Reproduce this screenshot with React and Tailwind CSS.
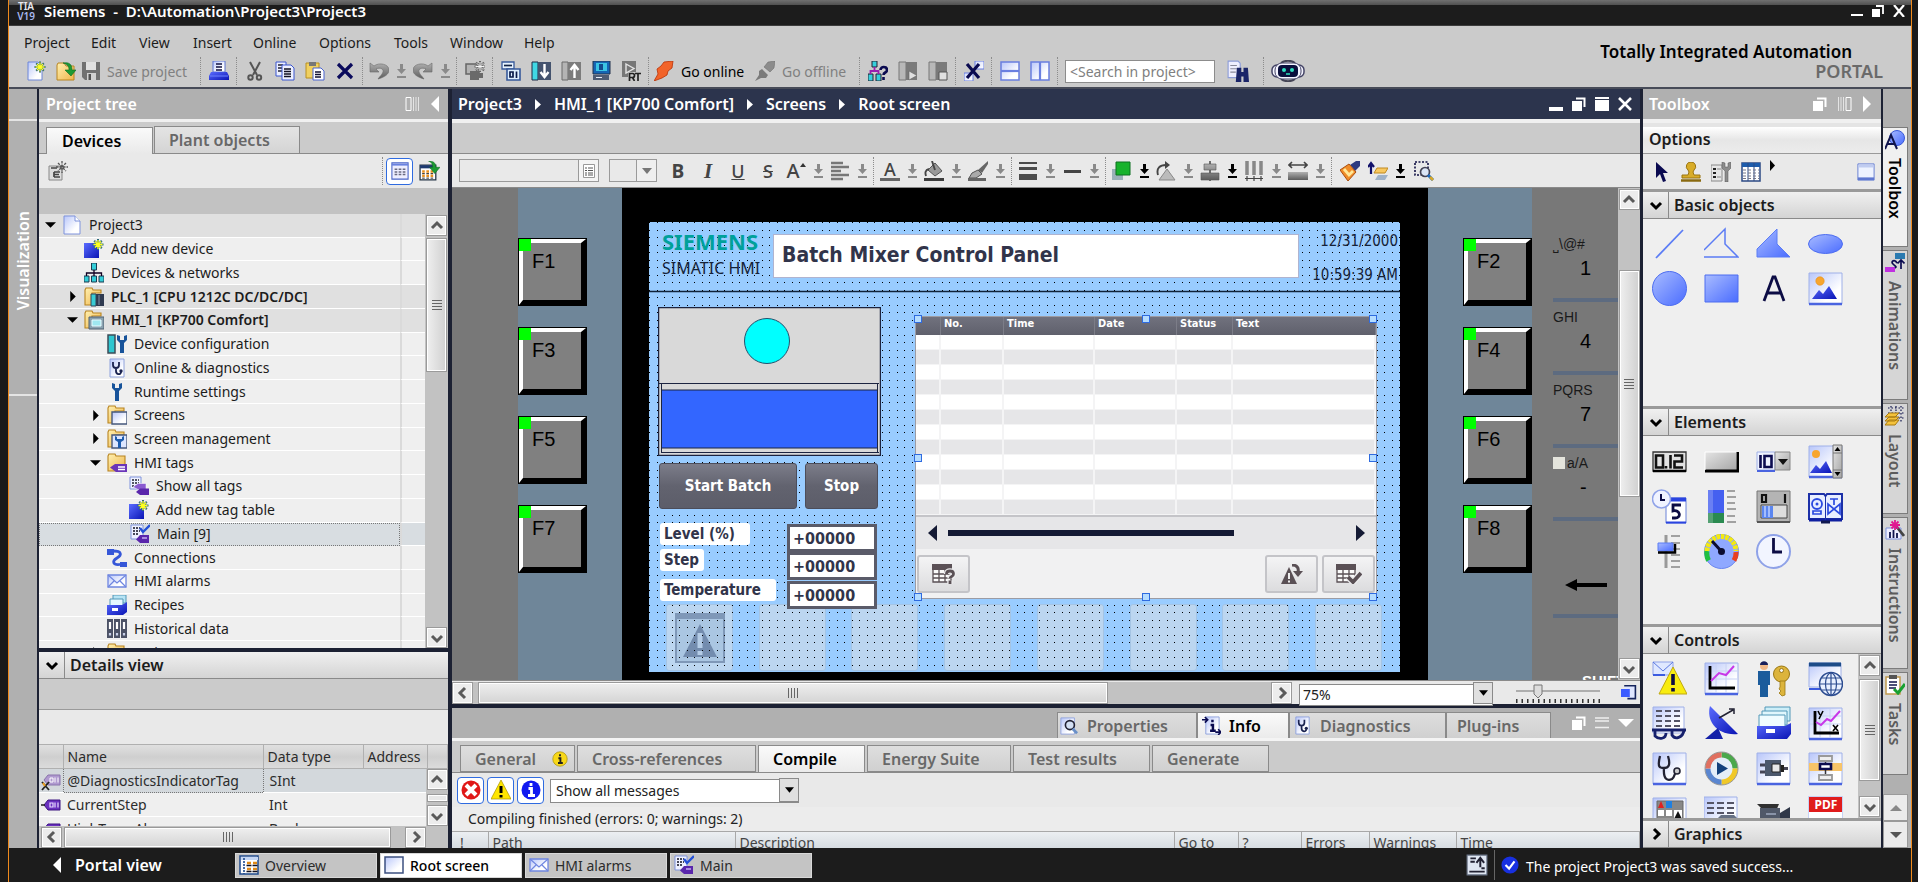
import React from "react";

const UI = "font-['Noto_Sans','Open_Sans',sans-serif]";
const HMI = "font-['DejaVu_Sans_Condensed','DejaVu_Sans',sans-serif]";

/* ---------- shared drawing pieces ---------- */

function Defs() {
  return (
    <svg className="absolute h-0 w-0" aria-hidden="true">
      <defs>
        <linearGradient id="lb" x1="0" y1="0" x2="1" y2="1">
          <stop offset="0" stopColor="#a9bcff" />
          <stop offset="1" stopColor="#4a6cff" />
        </linearGradient>
        <linearGradient id="pg" x1="0" y1="0" x2="1" y2="1">
          <stop offset="0" stopColor="#b8c6fa" />
          <stop offset="0.7" stopColor="#ffffff" />
        </linearGradient>
        <linearGradient id="db" x1="0" y1="0" x2="1" y2="1">
          <stop offset="0" stopColor="#5a6cff" />
          <stop offset="1" stopColor="#0a14b4" />
        </linearGradient>
        <linearGradient id="gr" x1="0" y1="0" x2="0" y2="1">
          <stop offset="0" stopColor="#b0b0b0" />
          <stop offset="1" stopColor="#5c5c5c" />
        </linearGradient>
        <linearGradient id="fo" x1="0" y1="0" x2="1" y2="1">
          <stop offset="0" stopColor="#fff0b0" />
          <stop offset="1" stopColor="#eeb54c" />
        </linearGradient>
        <linearGradient id="bt" x1="0" y1="0" x2="1" y2="1">
          <stop offset="0" stopColor="#e4e4e4" />
          <stop offset="1" stopColor="#a4a4a4" />
        </linearGradient>
        <pattern id="dots" width="15" height="15" patternUnits="userSpaceOnUse">
          <path d="M0 0h1v1H0zM8 0h1v1H8zM0 8h1v1H0zM8 8h1v1H8z" fill="#000" />
        </pattern>
      </defs>
    </svg>
  );
}

const spark = (x, y) => (
  <g transform={`translate(${x} ${y})`} stroke="#2d6a7a" strokeWidth="2">
    <path d="M0-5.500V5.500M-5.500 0H5.500M-3.800-3.800l7.600 7.600M-3.800 3.800l7.600-7.600" />
    <path d="M0-4.500V4.500M-4.500 0H4.500M-3-3l6 6M-3 3l6-6" stroke="#ffff20" strokeWidth="1.300" />
  </g>
);
const folder = <path d="M1 3l1-2h6l1 2h8v3h-9v12H1z" fill="url(#fo)" stroke="#b88420" strokeWidth="1.100" />;
const mountain = (
  <g>
    <circle cx="12" cy="10" r="4.200" fill="#f7a52e" stroke="#e88d10" strokeWidth="0.600" />
    <path d="M4 28l7-9 4 4 6-8 8 13z" fill="url(#db)" />
  </g>
);

const icons = {
  newp: <><path d="M2 1h10l4 4v14H2z" fill="url(#pg)" stroke="#6c86d8" />{spark(14, 6)}</>,
  open: <><path d="M1 4l1-2h6l2 3h8v14H1z" fill="url(#fo)" stroke="#b88420" /><path d="M7 2c6-1 9 1 9 7h4l-5 6-6-6h4c0-4-2-6-6-7z" fill="#1c9a34" stroke="#0d6b20" strokeWidth="0.600" /></>,
  save: <><path d="M1 1h18v18H4l-3-3z" fill="#707070" /><path d="M5 1h10v8H5z" fill="#e0e0e0" /><path d="M6 12h9v7H6z" fill="#d0d0d0" /><path d="M7.500 13h2.500v6H7.500z" fill="#505050" /></>,
  print: <><path d="M4 0h12v11H4z" fill="url(#pg)" stroke="#5a72d0" /><path d="M7 3h6M7 6h6M7 9h6" stroke="#101040" strokeWidth="1.300" /><path d="M2 11h16l2 4v4H0v-4z" fill="url(#db)" /><path d="M1 15h18" stroke="#6d82ff" /></>,
  cut: <g stroke="#555" fill="none" strokeWidth="2"><path d="M5 1l7 13M15 1L8 14" /><circle cx="5.500" cy="16.500" r="2.200" /><circle cx="14" cy="16.500" r="2.200" /></g>,
  copy: <><path d="M1 1h10v14H1z" fill="#eef1ff" stroke="#3a56d0" /><path d="M3 4h5M3 7h5M3 10h5" stroke="#223" strokeWidth="1.300" /><path d="M7 4h9l3 3v12H7z" fill="#eef1ff" stroke="#3a56d0" /><path d="M9 8h7M9 10.500h7M9 13h7M9 15.500h7" stroke="#112" strokeWidth="1.300" /></>,
  paste: <><path d="M1 2h13v15H1z" fill="#f0d060" stroke="#b89020" /><path d="M4 1h7v4H4z" fill="#777" /><path d="M8 7h8l3 3v9H8z" fill="#fff" stroke="#4a64d0" /><path d="M10 11h6M10 13.500h6M10 16h6" stroke="#113" strokeWidth="1.300" /></>,
  del: <path d="M3 3l14 14M17 3L3 17" stroke="#0a0a5c" strokeWidth="3.200" />,
  undo: <path d="M1 2v9h9L7 8c4-2 8 0 7 3-1 3-3 4-5 7 7-2 11-5 11-9 0-6-10-8-15-4z" fill="url(#gr)" stroke="#6a6a6a" strokeWidth="0.600" />,
  redo: <path d="M19 2v9h-9l3-3c-4-2-8 0-7 3 1 3 3 4 5 7C4 16 0 13 0 9c0-6 10-8 15-4z" fill="url(#gr)" stroke="#6a6a6a" strokeWidth="0.600" />,
  compile: <><path d="M1 3h13v10H1z" fill="#b4b4b4" stroke="#666" strokeWidth="1.500" /><path d="M5 10h9v9H5zM14 12h4v5h-4z" fill="#6a6a6a" /><path d="M15 0v11M9.500 5.500h11M11 1.500l8 8M19 1.500l-8 8" stroke="#666" strokeWidth="2" /><path d="M15 1v9M10.500 5.500h9M11.800 2.300l6.400 6.400M18.200 2.300l-6.400 6.400" stroke="#f4f4f4" strokeWidth="1" /></>,
  dl0: <><path d="M1 1h12v7H1z" fill="#e8f4ff" stroke="#37599a" strokeWidth="1.300" /><path d="M3 4.500h8" stroke="#124" strokeWidth="1.700" /><path d="M6 8h13v11H6z" fill="#dff0ff" stroke="#37599a" strokeWidth="1.600" /><path d="M9 11h3v5H9zM15.500 10.500V17" stroke="#0a1a4a" strokeWidth="1.700" fill="none" /></>,
  down: <><path d="M1 1h6v18H1z" fill="#40d8e4" stroke="#1d2a46" /><path d="M7 1h13v18H7z" fill="#44536e" /><path d="M13.500 3v12M9.500 11l4 5 4-5" stroke="#fff" strokeWidth="2.400" fill="none" /></>,
  up: <><path d="M1 1h6v18H1z" fill="#b4b4b4" stroke="#6a6a6a" /><path d="M7 1h13v18H7z" fill="#7c7c7c" /><path d="M13.500 17V5M9.500 9l4-5 4 5" stroke="#fff" strokeWidth="2.400" fill="none" /></>,
  pc: <><path d="M2 0h17v13H2z" fill="#1565b4" stroke="#22334e" /><path d="M5 2h11v8H5z" fill="#3ac4e4" /><path d="M8 3h4v6H8z" fill="#124a8c" /><path d="M2 14h16v5H2z" fill="#4e5c74" /><path d="M5 16.500h6" stroke="#e8eefa" /></>,
  rt: <><path d="M1 0h14v16H1z" fill="#777" /><path d="M5 3l8 4.500-8 4.500z" fill="none" stroke="#e4e4e4" strokeWidth="1.400" /><path d="M7 11h13v9H7z" fill="#cbcbcb" /><path d="M8.500 20v-7.500h3a2 2 0 010 4h-3M11.500 16.500l2 3.500M14 12.500h6M17 12.500v7.500" stroke="#222" strokeWidth="1.700" fill="none" /></>,
  online: <path d="M0 20l4-7-1-5 4-3 3-4 9-1-1 7-4 3-1 4-5 3z" fill="#f2642a" stroke="#b83208" strokeWidth="0.800" />,
  offline: <><path d="M0 20l4-6 0-4 3-2 6 6-2 3-5 0z" fill="#7a7a7a" /><path d="M9 6l4-5 7-1-1 7-4 4z" fill="#8c8c8c" stroke="#666" strokeWidth="0.500" /></>,
  nethelp: <><path d="M4 0h5v6H4zM0 13h5v7H0zM8 13h5v7H8z" fill="#35d0dc" stroke="#223" /><path d="M6.500 6v4M2.500 13v-3h8v3" stroke="#9a20b0" strokeWidth="1.800" fill="none" /><path d="M12.500 9c0-4 6.500-4 6.500 0 0 3-3.500 2-3.500 5M15.500 16v3" stroke="#0a0a50" strokeWidth="2.600" fill="none" /></>,
  start: <><path d="M1 1h7v18H1z" fill="#b8b8b8" stroke="#777" /><path d="M8 1h11v18H8z" fill="#7a7a7a" /><path d="M11 10l8 4.500-8 4.500z" fill="#e0e0e0" stroke="#666" strokeWidth="0.600" /></>,
  stop: <><path d="M1 1h7v18H1z" fill="#b8b8b8" stroke="#777" /><path d="M8 1h11v18H8z" fill="#7a7a7a" /><path d="M11 11h8v8h-8z" fill="#e0e0e0" stroke="#555" /></>,
  xref: <><path d="M11 0h9v8h-9zM0 12h9v8H0z" fill="url(#pg)" stroke="#6a7fe0" /><path d="M3 3l12 14M15 3L3 17" stroke="#0a0a50" strokeWidth="3.200" /></>,
  splith: <><path d="M1 1h18v18H1z" fill="url(#pg)" stroke="#6a7fe0" strokeWidth="1.500" /><path d="M1 10h18" stroke="#6a7fe0" strokeWidth="2.200" /></>,
  splitv: <><path d="M1 1h18v18H1z" fill="url(#pg)" stroke="#6a7fe0" strokeWidth="1.500" /><path d="M10 1v18" stroke="#6a7fe0" strokeWidth="2.200" /></>,
  find: <><path d="M1 1h9l2 2v13H1z" fill="#eef" stroke="#8c9cd8" /><path d="M3 5h6M3 8h6M3 11h5" stroke="#889" /><path d="M9 7h4v4h2V7h4l1 13h-5v-5h-2v5H8z" fill="#1a2468" /></>,
  doc: <><path d="M2 1h11l5 5v13H2z" fill="url(#pg)" stroke="#7f93dc" /><path d="M13 1v5h5" fill="#fff" stroke="#7f93dc" /></>,
  addnew: <><path d="M0 4h15v15H0z" fill="url(#db)" />{spark(14, 5.5)}</>,
  net: <><path d="M7.500 0h5v7h-5zM0 13h5v6H0zM7.500 13h5v6h-5zM15 13h5v6h-5z" fill="#33cdd8" stroke="#1a3a50" /><path d="M10 7v6M2.500 13v-3h15v3" stroke="#102" strokeWidth="1.300" fill="none" /></>,
  plc: <>{folder}<path d="M8 7h12v12H8z" fill="#2f3a50" /><path d="M7 7h5v12H7z" fill="#39ccd4" stroke="#33475a" /><path d="M15 8v10" stroke="#8491a8" /></>,
  hmi: <>{folder}<path d="M5 7h15v12H5z" fill="#8aa2b0" stroke="#506070" /><path d="M8 10h9v6H8z" fill="#9fe8f0" stroke="#e8fcff" /></>,
  devconf: <><path d="M1 1h7v18H1z" fill="#2fc6d0" stroke="#3c4c58" strokeWidth="1.500" /><path d="M10 1v5l3 3v10h4V9l3-3V1l-3 1v4h-4V2z" fill="#17539a" /></>,
  diag: <><path d="M3 1h14v18H3z" fill="url(#pg)" stroke="#8fa2dc" /><path d="M6 4v3c0 4 6 4 6 0V4M9 10v3c0 4 5 4 5 1" stroke="#1a2250" strokeWidth="1.800" fill="none" /><circle cx="14" cy="13" r="1.700" fill="#1a2250" /></>,
  wrench: <path d="M5 1v5l3 3v10h4V9l3-3V1l-3 1v4H8V2z" fill="#17539a" />,
  scr: <>{folder}<path d="M5 7h15v12H5z" fill="url(#pg)" stroke="#46587c" strokeWidth="1.400" /></>,
  scrm: <>{folder}<path d="M5 6h15v13H5z" fill="#dce6ff" stroke="#46587c" strokeWidth="1.400" /><path d="M8 7v4l3 2v6h3v-6l3-2V7l-2 1v2h-5V8z" fill="#1c5cae" /></>,
  tagf: <><path d="M1 3l1-2h6l1 2h9v15H1z" fill="url(#fo)" stroke="#b88420" strokeWidth="1.100" /><path d="M3 14.500l5-3.500h12v8H9z" fill="#6a35b8" /><path d="M11 14h7M11 16.500h7" stroke="#fff" strokeWidth="1.300" /></>,
  tags: <><path d="M1 1h11v12H1z" fill="#eef1ff" stroke="#7f93dc" /><path d="M3 4h7M3 7h7M3 10h4" stroke="#223" strokeDasharray="2 1" strokeWidth="1.300" /><path d="M4 11l5-3.500h8v6H9z" fill="#8a5ad0" stroke="#fff" strokeWidth="0.500" /><path d="M7 16l4-3.500h9V19h-9z" fill="#5a26ac" /></>,
  tagt: <><path d="M1 1h12v14H1z" fill="#eef1ff" stroke="#7f93dc" /><path d="M3 4h7M3 7h7M3 10h6" stroke="#112" strokeDasharray="2 1" strokeWidth="1.500" /><path d="M10 4l3 4 7-7" stroke="#2350d8" strokeWidth="2.400" fill="none" /><path d="M6 15.500l4-4.500h9v8h-9z" fill="#5a26ac" /><path d="M12 13h5v2h-5z" fill="#a98ae0" /></>,
  conn: <><path d="M0 1h7v6H0zM13 14h7v5h-7z" fill="#3657d8" /><path d="M6 3c9 0 9 4 4 7s-5 8 5 6" stroke="#3657d8" strokeWidth="2.800" fill="none" /></>,
  mail: <><path d="M1 4h18v12H1z" fill="url(#pg)" stroke="#6f86e0" strokeWidth="1.300" /><path d="M1 4l9 8 9-8M1 16l6-6M19 16l-6-6" stroke="#6f86e0" strokeWidth="1.200" fill="none" /></>,
  recipe: <><path d="M6 0h13v8H6z" fill="#b8e4f4" stroke="#5298b8" /><path d="M3 4h13v7H3z" fill="#e6f8ff" stroke="#5298b8" /><path d="M0 10h15l5-3v10l-4 3H0z" fill="url(#db)" /><path d="M5 13h6v3H5z" fill="#fff" /></>,
  hist: <><path d="M0 0h6v19H0zM7 0h6v19H7zM14 0h6v19h-6z" fill="#4c5266" /><path d="M3 3v7M10 3v7M17 3v7" stroke="#fff" strokeWidth="2.200" /><path d="M3 14v2.500M10 14v2.500M17 14v2.500" stroke="#c8d0e8" strokeWidth="2.200" /></>,
  tag: <><path d="M3 10l4-5h12v10H7z" fill="#6a2fc0" stroke="#3c1480" /><path d="M9 8h3v4H9zM14 7.500v5M17 7.500v5" stroke="#e8dcff" fill="none" strokeWidth="1.200" /><path d="M0 10h4" stroke="#222" strokeWidth="1.500" /></>,
  tagx: <><path d="M3 9l4-5h12v10H7z" fill="#b09ad0" stroke="#8a74ac" /><path d="M9 7h3v4H9zM14 6.500v5M17 6.500v5" stroke="#fff" fill="none" /><path d="M1 11l7 8M8 11l-7 8" stroke="#222" strokeWidth="1.800" /><path d="M2 12l2 3" stroke="#f0a020" strokeWidth="2" /></>,
  newgray: <><path d="M1 5h13v14H1z" fill="#ddd" stroke="#888" /><path d="M3 7h6M6 11h6M6 16v-5M6 16h6M6 13.500h5" stroke="#444" strokeWidth="1.700" /><path d="M14 0v12M8 6h12M10 2l8 8M18 2l-8 8" stroke="#555" strokeWidth="1.300" strokeDasharray="2.500 1" /></>,
  grid: <><path d="M1 1h18v18H1z" fill="#eef" stroke="#4a64c8" strokeWidth="1.200" /><path d="M1 3h18" stroke="#6a82e0" strokeWidth="2" /><path d="M4 8h3M8.500 8h3M13 8h3M4 11h3M8.500 11h3M13 11h3M4 14h3M8.500 14h3M13 14h3" stroke="#6a6a80" strokeWidth="1.700" /></>,
  gridgo: <><path d="M1 4h15v14H1z" fill="#fff" stroke="#234" strokeWidth="1.200" /><path d="M1 5.500h15" stroke="#1d3a70" strokeWidth="3" /><path d="M3 10h11M3 14h11" stroke="#e89020" strokeWidth="2.400" strokeDasharray="2.500 1.500" /><path d="M3 12h11M3 16.300h11" stroke="#222" strokeWidth="0.900" strokeDasharray="2.500 1.500" /><path d="M9 0c5 0 7 2 7 6h4l-5 6-5-6h3c0-3-1-5-4-6z" fill="#1c9a34" stroke="#0d6b20" strokeWidth="0.500" /></>,
  overview: <><path d="M1 1h18v18H1z" fill="#fff" stroke="#1f4a8c" strokeWidth="1.500" /><path d="M2 2h17v3H2z" fill="#c4d6f4" /><path d="M5 3v16" stroke="#1f4a8c" strokeWidth="1.600" strokeDasharray="2 1" /><path d="M8 8h4M14 8h4M8 14h4M14 14h4" stroke="#e08a18" strokeWidth="2.400" /><path d="M7.500 10.500h5M13.500 10.500h5M7.500 16.500h5M13.500 16.500h5" stroke="#112" strokeWidth="1.300" /></>,
  screen: <path d="M1 2h18v16H1z" fill="url(#pg)" stroke="#3c5080" strokeWidth="1.500" />,
  align: <path d="M1 2h12M1 6h18M1 10h10M1 14h18M1 18h12" stroke="#777" strokeWidth="2.400" />,
  bucket: <><path d="M4 9l7-7 7 8-7 5z" fill="#999" stroke="#555" /><path d="M8 0l3 9M5 8c-4 1-4 4-3 7" stroke="#444" fill="none" strokeWidth="1.900" /><path d="M0 18.500h20" stroke="#3c3c3c" strokeWidth="3" /></>,
  pen: <><path d="M20 0l-10 9 4 3 6-9z" fill="#666" /><path d="M10 9l-6 3-3 5 7 0 6-4z" fill="#aaa" stroke="#555" /><path d="M0 18.500h18" stroke="#666" strokeWidth="3" /></>,
  green: <><path d="M0 8h11v11H0z" fill="#9ab0b8" /><path d="M4 1h14v13H4z" fill="#18b22c" stroke="#0c7020" /></>,
  rot: <><path d="M3 19l8-11 8 11z" fill="#bbb" stroke="#888" /><path d="M2 14C0 7 4 4 10 4" stroke="#444" strokeWidth="1.900" fill="none" /><path d="M9 0l5 4-5 4z" fill="#444" /></>,
  alignc: <><path d="M10 0v20" stroke="#444" strokeWidth="1.500" /><path d="M4 3h12v6H4zM1 12h18v7H1z" fill="url(#gr)" stroke="#555" strokeWidth="0.600" /></>,
  dist: <><path d="M3 0v14M10 0v14M17 0v14" stroke="#888" strokeWidth="3.500" /><path d="M1 17.500h18M3 15v5M10 15v5M17 15v5" stroke="#444" strokeWidth="1.200" /></>,
  wid: <><path d="M1 4h18M4 1L1 4l3 3M16 1l3 3-3 3" stroke="#444" strokeWidth="1.600" fill="none" /><path d="M0 11h20v8H0z" fill="url(#gr)" /></>,
  brush: <><path d="M20 0l-4 0-6 4 5 6 5-5z" fill="#2c3a80" /><path d="M9 3l7 8-8 9-8-11z" fill="#f08c28" stroke="#a84e10" /><path d="M4 8l5 6 4-4" stroke="#ffe898" strokeWidth="2.800" fill="none" /></>,
  order: <><path d="M3 13V3M0 6l3-4 3 4" stroke="#10106a" strokeWidth="2.200" fill="none" /><path d="M6 12l3-5h11l-3 5z" fill="#f8c860" stroke="#c08a20" /><path d="M7 19l3-5h10l-3 5z" fill="#9fb2c8" /></>,
  zoomsel: <><path d="M1 1h13v13H1z" fill="none" stroke="#114" strokeWidth="1.600" strokeDasharray="2 1.500" /><circle cx="11" cy="11" r="4.500" fill="#dce6f6" stroke="#445" strokeWidth="1.700" /><path d="M14 14l5 5" stroke="#1d6ac0" strokeWidth="3" /><path d="M16 16l3 3" stroke="#d8a828" strokeWidth="2.500" /></>,
  cursor: <path d="M5 0v16l4-4 3 8 3-1-3-8h5z" fill="#0a0a50" />,
  stamp: <><path d="M10 0a4.500 4.500 0 013 8l-1 2 1 3h6v3H1v-3h6l1-3-1-2a4.500 4.500 0 013-8z" fill="#d8ac28" stroke="#9a7410" /><path d="M0 18.500h20" stroke="#8a6a10" strokeWidth="2.500" /></>,
  tools: <><path d="M0 3h11v16H0z" fill="#e6e6e6" stroke="#888" /><path d="M2 7h3M2 11h3M2 15h3" stroke="#222" strokeWidth="2.200" /><path d="M6 7h4M6 15h4" stroke="#888" /><path d="M11 0v6l3 3v11h3V9l3-3V0l-3 1v4h-3V1z" fill="#8c8c8c" stroke="#555" strokeWidth="0.500" /></>,
  cols: <><path d="M1 1h18v18H1z" fill="#fff" stroke="#2c4a84" strokeWidth="1.500" /><path d="M1 3h18" stroke="#1d5cac" strokeWidth="4" /><path d="M7 1v18M13 1v18" stroke="#2c4a84" /><path d="M2 8h16M2 11h16M2 14h16M2 16.500h16" stroke="#778" strokeDasharray="3 2" /></>,
  win: <><path d="M1 1h18v18H1z" fill="#eef3ff" stroke="#5f78d0" /><path d="M2 2h16v3H2z" fill="#c0ccf0" /><path d="M1 17.500h18" stroke="#5f78d0" strokeWidth="3" /></>,
  cross: <><circle cx="10" cy="10" r="9.500" fill="#e01818" /><path d="M5 5l10 10M15 5L5 15" stroke="#fff" strokeWidth="4" /></>,
  warn: <><path d="M10 0l10 19H0z" fill="#ffe600" stroke="#a89000" strokeWidth="0.700" /><path d="M10 6v7M10 15v2.500" stroke="#000" strokeWidth="3" /></>,
  info: <><circle cx="10" cy="10" r="9.500" fill="#1018f0" /><path d="M10 3v3M7.500 8.500H10.500V15M7 15.500h7" stroke="#fff" strokeWidth="2.800" fill="none" /></>,
  infoy: <><circle cx="10" cy="10" r="9" fill="#f8d818" stroke="#b09810" /><path d="M10 4v2.500M8 9h2.500v5M7.500 15h6" stroke="#222" strokeWidth="2.400" fill="none" /></>,
  prop: <><path d="M1 1h15v18H1z" fill="url(#pg)" stroke="#8fa2dc" /><circle cx="11" cy="9" r="5" fill="#d4e0f4" stroke="#223" strokeWidth="1.800" /><path d="M14 13l5 5" stroke="#6a90c8" strokeWidth="3" /></>,
  infot: <><path d="M4 1h14v18H4z" fill="url(#pg)" stroke="#8fa2dc" /><path d="M0 4h6M3 1l3 3-3 3M14 17h6M17 14l3 3-3 3" stroke="#0a0a50" strokeWidth="1.700" fill="none" /><path d="M11 4v2.500M9 9.500h2.500v5M8.500 15.500h6" stroke="#0a0a50" strokeWidth="2.600" fill="none" /></>,
  ok: <><circle cx="10" cy="10" r="9.500" fill="#1830e0" /><path d="M5 10l4 4 6-8" stroke="#fff" strokeWidth="2.400" fill="none" /></>,
  stat: <><path d="M1 1h18v18H1z" fill="#dfe6f2" stroke="#6a7488" /><path d="M4 4h5M4 7h4M3 16h14M14 13h3" stroke="#223" strokeWidth="1.700" /><path d="M13 12V4M9.500 8L13 3.500 16.500 8" stroke="#223" strokeWidth="1.800" fill="none" /></>,
  tbA: <><circle cx="12" cy="8" r="7.500" fill="url(#lb)" stroke="#3a5ad8" /><path d="M0 19l6-14 6 14M2.500 14h7" stroke="#10144c" strokeWidth="2" fill="none" /></>,
  anim: <><path d="M10 0h10v6H10z" fill="#2a7ab0" /><path d="M0 14h10v5H0z" fill="#c030e0" /><path d="M16 7v9M12.500 10.500L16 7l3.500 3.500M12 10c-2-4-7-2-4 1s4 3 2 4" stroke="#0a0a50" strokeWidth="1.700" fill="none" /></>,
  layout: <><path d="M3 2h16M3 7h16M3 12h16M6 0v16M11 0v16M16 0v16" stroke="#10144c" strokeWidth="1.200" strokeDasharray="1.500 2" /><path d="M0 19l4-5h10l-4 5zM0 15l4-4h10l-4 4zM0 11l4-4h10l-4 4z" fill="#f4c23c" stroke="#a87a10" /></>,
  instr: <><path d="M1 8h15v11H1z" fill="#eef" stroke="#7f93dc" /><path d="M5 12v6M8.500 10v8M12 13v5" stroke="#10144c" strokeWidth="1.800" /><path d="M11 6l8 10" stroke="#444" strokeWidth="2.800" /><path d="M10 0v10M5 5h10M6.500 1.500l7 7M13.500 1.500l-7 7" stroke="#e01890" strokeWidth="1.800" /></>,
  tasks: <><path d="M1 2h14v17H1z" fill="#fff" stroke="#c09a50" strokeWidth="1.500" /><path d="M4 0h8v4H4z" fill="#555" /><path d="M4 7h8M4 10h8M4 13h7" stroke="#10144c" strokeWidth="1.500" /><path d="M9 14l4 4 7-9" stroke="#18a030" strokeWidth="3" fill="none" /></>,
  corner: <><path d="M4 1h14v16H8" fill="#dfe6ff" stroke="#16245c" strokeWidth="2" /><path d="M0 5h11v10H0z" fill="#3c5cff" /></>,
};

function Icon({ n, className = "h-5 w-5" }) {
  return (
    <svg viewBox="0 0 20 20" className={`${className} shrink-0`} fill="none" aria-hidden="true">
      {icons[n]}
    </svg>
  );
}

function Drop({ dark }) {
  return (
    <svg viewBox="0 0 12 16" className="h-4 w-3 shrink-0" aria-hidden="true">
      <path d="M5 1h3v5h3L6.500 11 2 6h3zM2 13h9v2H2z" fill={dark ? "#000" : "#8a8a8a"} />
    </svg>
  );
}

const Sep = () => <span className="mr-[3px] ml-[2px] h-7 w-px shrink-0 border-l border-dotted border-[#8c8c8c]" />;

function Tool({ n, label, size }) {
  return (
    <button aria-label={label || n} className="flex w-[30px] shrink-0 items-center justify-center">
      <Icon n={n} className={size} />
    </button>
  );
}

function Split({ label, dark, children }) {
  return (
    <button aria-label={label} className="flex h-7 w-[44px] shrink-0 items-center gap-[6px] pl-[3px]">
      <span className="flex w-5 justify-center">{children}</span>
      <Drop dark={dark} />
    </button>
  );
}

const chev = {
  up: "M3 10l5-5 5 5",
  down: "M3 6l5 5 5-5",
  left: "M10 3L5 8l5 5",
  right: "M6 3l5 5-5 5",
};
function Chevron({ d, className = "h-4 w-4", w = 3, color = "#5a5a5a" }) {
  return (
    <svg viewBox="0 0 16 16" className={`${className} shrink-0`} fill="none" aria-hidden="true">
      <path d={chev[d]} stroke={color} strokeWidth={w} />
    </svg>
  );
}
function ScrollBtn({ d, className = "h-[21px] w-[21px]" }) {
  return (
    <button aria-label={`Scroll ${d}`} className={`${className} flex shrink-0 items-center justify-center border border-[#9a9a9a] bg-[#ececec] shadow-[inset_0_0_0_1px_#fff]`}>
      <Chevron d={d} />
    </button>
  );
}
const THUMB = "flex items-center justify-center border border-[#9a9a9a] shadow-[inset_0_0_0_1px_#fff]";
const GripV = () => <span className="flex flex-col gap-[2px]">{[0, 1, 2, 3].map((i) => <i key={i} className="h-px w-[10px] bg-[#666]" />)}</span>;
const GripH = () => <span className="flex gap-[2px]">{[0, 1, 2, 3].map((i) => <i key={i} className="h-[10px] w-px bg-[#666]" />)}</span>;

const WinMin = () => <svg viewBox="0 0 14 16" className="h-4 w-[14px]"><path d="M0 11h14v4H0z" fill="#fff" /></svg>;
const WinRest = () => <svg viewBox="0 0 14 14" className="h-[14px] w-[14px]"><path d="M0 4h10v10H0z" fill="#fff" /><path d="M4 1.500h8.500V10" stroke="#fff" strokeWidth="2" fill="none" /></svg>;
const WinMax = () => <svg viewBox="0 0 14 14" className="h-[14px] w-[14px]"><path d="M0 0h14v2H0zM0 3h14v11H0z" fill="#fff" /></svg>;
const WinX = () => <svg viewBox="0 0 14 14" className="h-[14px] w-[14px]"><path d="M1 1l12 12M13 1L1 13" stroke="#fff" strokeWidth="2.600" /></svg>;
const PinBars = ({ flip }) => (
  <svg viewBox="0 0 14 14" className={flip ? "h-[14px] w-[14px] rotate-180" : "h-[14px] w-[14px]"}>
    <path d="M1 .5h5v13H1z" stroke="#fff" fill="none" /><path d="M8.500 0v14M11 0v14M13.500 0v14" stroke="#e4e4e4" />
  </svg>
);
const Tri = ({ d, fill = "#fff", className = "h-4 w-2" }) => (
  <svg viewBox="0 0 8 16" className={className} preserveAspectRatio="none" aria-hidden="true">
    <path d={d === "left" ? "M8 0v16L0 8z" : "M0 0v16l8-8z"} fill={fill} />
  </svg>
);

/* ---------- title bar, menu, main toolbar ---------- */

function TopBar() {
  const menu = [["Project", "w-[67px]"], ["Edit", "w-[48px]"], ["View", "w-[54px]"], ["Insert", "w-[60px]"], ["Online", "w-[66px]"], ["Options", "w-[75px]"], ["Tools", "w-[56px]"], ["Window", "w-[74px]"], ["Help", "w-[50px]"]];
  return (
    <header className="shrink-0">
      <div className="flex h-[26px] items-center justify-between border-b border-[#3c3c3c] bg-[linear-gradient(#707070_0,#505050_5px,#1c1c1c_5px)] pr-[6px] pb-1 pl-[7px] text-white">
        <div className="flex items-center gap-2">
          <svg viewBox="0 0 20 20" className="h-5 w-5" aria-hidden="true">
            <text x="10" y="9" textAnchor="middle" fontSize="10" fontWeight="600" fill="#e8e8f0">TIA</text>
            <text x="10" y="19" textAnchor="middle" fontSize="10" fontWeight="600" fill="#a9b8f0">V19</text>
          </svg>
          <h1 className="text-[15px] leading-5 font-semibold">Siemens&nbsp; - &nbsp;D:\Automation\Project3\Project3</h1>
        </div>
        <div className="flex items-center gap-[9px]">
          <button aria-label="Minimize"><svg viewBox="0 0 12 12" className="h-3 w-3"><path d="M0 9h12v2H0z" fill="#fff" /></svg></button>
          <button aria-label="Restore"><svg viewBox="0 0 12 12" className="h-3 w-3"><path d="M0 4h8v8H0z" fill="#fff" /><path d="M4 1h7v8" stroke="#fff" strokeWidth="1.800" fill="none" /></svg></button>
          <button aria-label="Close"><svg viewBox="0 0 12 12" className="h-3 w-3"><path d="M1 0l10 12M11 0L1 12" stroke="#fff" strokeWidth="2.200" /></svg></button>
        </div>
      </div>
      <div className="flex h-[63px] justify-between border-b-2 border-[#474b58] bg-[#cbcbcb]">
        <div>
          <nav className="flex h-[29px] items-end pl-[15px] text-[14px] leading-6 text-[#1c1c1c]">
            {menu.map(([m, w]) => <a key={m} href="#" className={w}>{m}</a>)}
          </nav>
          <div className="flex h-[32px] items-center pl-[12px]">
            <Tool n="newp" label="New project" /><Tool n="open" label="Open project" />
            <button className="flex w-[117px] items-center gap-[6px] text-[14px] whitespace-nowrap text-[#808080]"><Icon n="save" />Save project</button>
            <Sep /><Tool n="print" /><Sep />
            <Tool n="cut" /><Tool n="copy" /><Tool n="paste" /><Tool n="del" label="Delete" />
            <Sep />
            <Split label="Undo"><Icon n="undo" /></Split><Split label="Redo"><Icon n="redo" /></Split>
            <Sep /><Tool n="compile" /><Sep />
            <Tool n="dl0" label="Load" /><Tool n="down" label="Download" /><Tool n="up" label="Upload" /><Tool n="pc" label="Simulation" /><Tool n="rt" label="Runtime" />
            <Sep />
            <button className="flex w-[101px] items-center gap-[7px] pl-[2px] text-[14px] whitespace-nowrap text-black"><Icon n="online" />Go online</button>
            <button className="flex w-[104px] items-center gap-[7px] pl-[2px] text-[14px] whitespace-nowrap text-[#808080]"><Icon n="offline" />Go offline</button>
            <Sep /><Tool n="nethelp" label="Accessible devices" /><Tool n="start" label="Start" /><Tool n="stop" label="Stop" />
            <Sep /><Tool n="xref" label="Cross-references" /><Sep /><Tool n="splith" label="Split horizontally" /><Tool n="splitv" label="Split vertically" /><Sep />
            <input aria-label="Search in project" placeholder="<Search in project>" className="ml-1 h-[23px] w-[150px] border border-[#8c8c8c] bg-white px-1 text-[14px] placeholder:text-[#808080]" />
            <button aria-label="Search" className="flex w-[46px] justify-center"><Icon n="find" className="h-[22px] w-[22px]" /></button>
            <Sep />
            <button aria-label="Assistant" className="pl-1">
              <svg viewBox="0 0 34 22" className="h-[22px] w-[34px]"><path d="M10 3c4-3 10-3 14 0M10 19c4 3 10 3 14 0" stroke="#445" strokeWidth="2" fill="none" /><rect x="1" y="5" width="32" height="12" rx="5" fill="#f4f4ff" stroke="#446" strokeWidth="1.500" /><rect x="4" y="3" width="26" height="16" rx="7" fill="#f4f4ff" stroke="#446" /><rect x="7" y="5" width="20" height="12" rx="4" fill="#0a0f3c" /><circle cx="13" cy="10" r="2" fill="#2fe0c0" /><circle cx="21" cy="10" r="2" fill="#2fe0c0" /><path d="M15 14h4" stroke="#2fe0c0" strokeWidth="1.500" /></svg>
            </button>
          </div>
        </div>
        <div className="flex flex-col items-end pt-[16px] pr-[28px] text-[17px] leading-[20px] font-semibold">
          <span className="pr-[31px]">Totally Integrated Automation</span>
          <span className="text-[18px] leading-[18px] text-[#6a6a6a]">PORTAL</span>
        </div>
      </div>
    </header>
  );
}

/* ---------- project tree ---------- */

const ROWS = [
  [0, "doc", "Project3", "open", "head"],
  [1, "addnew", "Add new device"],
  [1, "net", "Devices & networks"],
  [1, "plc", "PLC_1 [CPU 1212C DC/DC/DC]", "closed", "bold"],
  [1, "hmi", "HMI_1 [KP700 Comfort]", "open", "bold"],
  [2, "devconf", "Device configuration"],
  [2, "diag", "Online & diagnostics"],
  [2, "wrench", "Runtime settings"],
  [2, "scr", "Screens", "closed"],
  [2, "scrm", "Screen management", "closed"],
  [2, "tagf", "HMI tags", "open"],
  [3, "tags", "Show all tags"],
  [3, "addnew", "Add new tag table"],
  [3, "tagt", "Main [9]", null, "sel"],
  [2, "conn", "Connections"],
  [2, "mail", "HMI alarms"],
  [2, "recipe", "Recipes"],
  [2, "hist", "Historical data"],
  [2, "scr", "Scripts", "closed"],
];
const INDENT = ["pl-0", "pl-[22px]", "pl-[45px]", "pl-[67px]"];

function TreeRow({ row }) {
  const [lvl, icon, text, arrow, kind] = row;
  const bg = kind === "sel" ? "bg-[#d8dde1]" : kind ? "bg-[#e0e0e0]" : "bg-[#efefef]";
  const sel = kind === "sel" ? "border border-dotted border-[#777]" : "border-b border-white";
  return (
    <li className={`flex min-h-0 flex-1 ${bg}`}>
      <div className={`flex flex-1 items-center ${INDENT[lvl]} ${sel}`}>
        <span className="flex w-[23px] justify-center">
          {arrow === "open" && <svg viewBox="0 0 12 6" className="h-[6px] w-[11px]"><path d="M0 0h12L6 6z" /></svg>}
          {arrow === "closed" && <svg viewBox="0 0 6 12" className="h-[11px] w-[6px]"><path d="M0 0v12l6-6z" /></svg>}
        </span>
        <Icon n={icon} />
        <span className={`pl-[7px] text-[14px] leading-5 text-[#1c1c1c] ${kind === "bold" ? "font-semibold" : ""}`}>{text}</span>
      </div>
      <div className="w-[25px] border-b border-l-2 border-b-white border-l-[#dadada]" />
    </li>
  );
}

function SectionHead({ children, open = true }) {
  return (
    <button className="flex h-[27px] w-full shrink-0 items-stretch border-b border-[#8a8a8a] bg-linear-to-b from-[#f0f0f0] via-[#e2e2e2] to-[#d4d4d4] text-left text-[16px] font-semibold text-[#1c1c1c]">
      <span className="flex w-[26px] items-center justify-center border-r border-[#8a8a8a]"><Chevron d={open ? "down" : "right"} color="#000" w={3} className="h-4 w-4" /></span>
      <span className="pl-[5px] leading-[26px]">{children}</span>
    </button>
  );
}

function DetailsView() {
  const tags = [["tagx", "@DiagnosticsIndicatorTag", "SInt"], ["tag", "CurrentStep", "Int"], ["tag", "HighTempAlarm", "Bool"]];
  return (
    <section className="flex h-[196px] shrink-0 flex-col">
      <SectionHead>Details view</SectionHead>
      <div className="h-[31px] shrink-0 border-b border-[#9a9a9a] bg-[#cbcbcb]" />
      <div className="h-[34px] shrink-0 bg-[#e9e9e9]" />
      <div className="relative min-h-0 flex-1 overflow-hidden bg-[#efefef]">
        <table className="w-full table-fixed text-left text-[14px] text-[#2c2c2c]">
          <colgroup><col className="w-6" /><col className="w-[200px]" /><col className="w-[100px]" /><col className="w-16" /><col /></colgroup>
          <thead>
            <tr className="h-6 bg-linear-to-b from-[#e0e0e0] via-[#cfcfcf] to-[#dcdcdc]">
              {["", "Name", "Data type", "Address", ""].map((h, i) => <th key={i} className="h-6 border-y border-r border-[#b0b0b0] p-0 pl-1 leading-5 font-normal">{h}</th>)}
            </tr>
          </thead>
          <tbody>
            {tags.map(([ic, n, t], i) => (
              <tr key={n} className={i === 0 ? "bg-[#d3d8dc]" : "bg-[#efefef]"}>
                <td className="h-6 border-b border-white p-0 pl-[2px]"><Icon n={ic} /></td>
                <td className={`h-6 p-0 pl-1 leading-5 ${i === 0 ? "border border-dotted border-[#777]" : "border-b border-white"}`}>{n}</td>
                <td className="h-6 border-b border-white p-0 pl-[6px] leading-5">{t}</td>
                <td className="border-b border-white" /><td />
              </tr>
            ))}
          </tbody>
        </table>
        <div className="absolute top-[25px] right-0 bottom-0 flex w-[22px] flex-col items-center justify-between bg-[#c2c2c2]">
          <ScrollBtn d="up" />
          <div className={`${THUMB} h-2 w-[21px] bg-[#e8e8e8]`} />
          <ScrollBtn d="down" />
        </div>
      </div>
      <div className="flex h-[22px] shrink-0 items-center bg-[#c2c2c2] pr-[22px] pl-[2px]">
        <ScrollBtn d="left" />
        <div className={`${THUMB} ml-[2px] h-[21px] w-[327px] bg-linear-to-b from-[#efefef] to-[#d4d4d4]`}><GripH /></div>
        <span className="flex-1" />
        <ScrollBtn d="right" />
      </div>
    </section>
  );
}

function ProjectTree() {
  return (
    <aside className="flex w-[415px] shrink-0 flex-col border-r-4 border-l-2 border-[#1c2133] bg-[#c2c2c2]">
      <div className="flex h-[30px] shrink-0 items-center justify-between bg-[#b0b0b0] pr-[9px] pl-[7px]">
        <h2 className="text-[16px] font-semibold text-white">Project tree</h2>
        <div className="flex items-center gap-3"><PinBars /><Tri d="left" /></div>
      </div>
      <div className="flex h-[35px] shrink-0 items-end border-t-[3px] border-b border-t-[#f0f0f0] border-b-[#8a8a8a] bg-[#cbcbcb] pl-[7px]">
        <button className="relative top-px h-[27px] w-[107px] border border-b-0 border-[#8a8a8a] bg-linear-to-b from-[#fafafa] to-[#e9e9e9] pl-[15px] text-left text-[16px] leading-6 font-semibold">Devices</button>
        <button className="ml-px h-[27px] w-[146px] border border-b-0 border-[#8a8a8a] bg-linear-to-b from-[#e4e4e4] to-[#d4d4d4] pl-[14px] text-left text-[16px] leading-6 font-semibold text-[#686868]">Plant objects</button>
      </div>
      <div className="flex h-[34px] shrink-0 items-center bg-[#e9e9e9] pr-2 pl-[9px]">
        <button aria-label="New group"><Icon n="newgray" /></button>
        <span className="flex-1" />
        <Sep />
        <button aria-label="Table view" className="flex h-[27px] w-[27px] items-center justify-center rounded-sm border border-[#2f6be0] bg-white"><Icon n="grid" className="h-[18px] w-[18px]" /></button>
        <button aria-label="Export" className="ml-[6px]"><Icon n="gridgo" className="h-[21px] w-[21px]" /></button>
      </div>
      <div className="h-[26px] shrink-0" />
      <div className="flex min-h-0 flex-1 overflow-hidden border-b-4 border-[#1c2133]">
        <ul className="flex h-[451px] flex-1 flex-col">{ROWS.map((r, i) => <TreeRow key={i} row={r} />)}</ul>
        <div className="flex w-[23px] flex-col items-center pt-px">
          <ScrollBtn d="up" />
          <div className={`${THUMB} mt-[2px] h-[134px] w-[21px] bg-linear-to-r from-[#efefef] to-[#d0d0d0]`}><GripV /></div>
          <span className="flex-1" />
          <ScrollBtn d="down" />
        </div>
      </div>
      <DetailsView />
    </aside>
  );
}

/* ---------- editor ---------- */

function EditorToolbar() {
  return (
    <div className="flex h-[34px] shrink-0 items-center border-b border-[#8a8a8a] bg-[#e9e9e9] pl-[7px] text-[#444]">
      <div className="flex h-[23px] w-[140px] border border-[#9a9a9a]">
        <input aria-label="Font" className="w-[118px] bg-transparent" />
        <button aria-label="Font list" className="flex flex-1 items-center justify-center border-l border-[#9a9a9a] bg-[#f4f4f4]">
          <svg viewBox="0 0 12 14" className="h-[14px] w-3"><path d="M.5.5h11v13H.5z" fill="#fff" stroke="#999" /><path d="M2 4h2M2 6.500h2M2 9h2M2 11h2M5 4h5M5 6.500h5M5 9h5M5 11h5" stroke="#555" /></svg>
        </button>
      </div>
      <div className="mr-[6px] ml-[10px] flex h-[23px] w-[48px] border border-[#9a9a9a]">
        <input aria-label="Font size" className="w-[26px] bg-transparent" />
        <button aria-label="Size list" className="flex flex-1 items-center justify-center border-l border-[#9a9a9a] bg-[#efefef]"><svg viewBox="0 0 10 6" className="h-[6px] w-[10px]"><path d="M0 0h10L5 6z" fill="#777" /></svg></button>
      </div>
      <button className="w-[30px] font-['Open_Sans',sans-serif] text-[19px] leading-6 font-bold">B</button>
      <button className="w-[30px] font-['Liberation_Serif',serif] text-[21px] leading-6 font-bold italic">I</button>
      <button className="w-[30px] text-[18px] leading-6 font-medium underline">U</button>
      <button className="w-[30px] text-[18px] leading-6 font-medium line-through">S</button>
      <Split label="Grow font">
        <span className="text-[20px] leading-6 font-medium">A</span>
        <svg viewBox="0 0 6 4" className="mt-1 h-1 w-[6px] shrink-0"><path d="M0 4h6L3 0z" fill="#333" /></svg>
      </Split>
      <Split label="Alignment"><Icon n="align" /></Split>
      <Sep />
      <Split label="Font color"><span className="w-5 border-b-[3px] border-[#666] text-center text-[18px] leading-[18px] font-medium">A</span></Split>
      <Split label="Fill color"><Icon n="bucket" /></Split>
      <Split label="Line color"><Icon n="pen" /></Split>
      <Sep />
      <Split label="Line style"><svg viewBox="0 0 20 20" className="h-5 w-5"><path d="M1 1h18v2H1zM1 6h18v3H1zM1 13h18v6H1z" fill="#4c4c4c" /></svg></Split>
      <Split label="Line ends"><svg viewBox="0 0 20 20" className="h-5 w-5"><path d="M2 9h17v3H2z" fill="#444" /></svg></Split>
      <Sep />
      <Split label="Arrange" dark><Icon n="green" /></Split>
      <Split label="Rotate"><Icon n="rot" /></Split>
      <Split label="Align" dark><Icon n="alignc" /></Split>
      <Split label="Distribute"><Icon n="dist" /></Split>
      <Split label="Same width"><Icon n="wid" /></Split>
      <Sep />
      <Tool n="brush" label="Format painter" />
      <Split label="Order" dark><Icon n="order" /></Split>
      <Tool n="zoomsel" label="Zoom selection" />
    </div>
  );
}

function FKey({ name }) {
  return (
    <div className="relative h-[68px] w-[69px] border border-black">
      <div className="h-full border-t-4 border-r-[5px] border-b-[5px] border-l-4 border-t-white border-r-black border-b-black border-l-white bg-[#808080] pt-[6px] pl-[9px] font-['Liberation_Sans',sans-serif] text-[20px] leading-6 text-black">{name}</div>
      <span className="absolute top-0 left-0 h-3 w-3 bg-[#00ff00]" />
    </div>
  );
}
function Keys({ names }) {
  return <div className="flex flex-col gap-[21px] pt-[50px]">{names.map((n) => <FKey key={n} name={n} />)}</div>;
}

function IoField({ label }) {
  return <input aria-label={label} defaultValue="+00000" className="h-[28px] w-[90px] border-[3px] border-[#5a5b69] bg-white pl-[3px] text-[16px] leading-5 font-bold text-[#31344a]" />;
}

function AlarmView() {
  const cols = ["", "No.", "Time", "Date", "Status", "Text"];
  const btn = "flex h-[38px] w-[53px] items-center justify-center rounded-[3px] border-2 border-[#c4c4c8] bg-linear-to-b from-[#f4f4f5] to-[#dcdcde]";
  const grid = <><path d="M1 1h18v17H1z" fill="#fafafa" /><path d="M0 0h20v6H0z" fill="#5a5055" /><path d="M1 6v12h18V6M1 10h18M1 14h18M7 6v12M13 6v12" stroke="#5a5055" strokeWidth="1.300" fill="none" /></>;
  return (
    <div className="absolute top-[94px] left-[266px] flex h-[283px] w-[462px] flex-col border border-[#9c9ca4] bg-[#f1f1f2]">
      <table className="w-full table-fixed border-separate border-spacing-0 text-left">
        <colgroup><col className="w-[25px]" /><col className="w-[63px]" /><col className="w-[91px]" /><col className="w-[82px]" /><col className="w-[56px]" /><col /></colgroup>
        <thead>
          <tr className="bg-linear-to-b from-[#71727e] to-[#5f606c] text-[11px] font-bold text-white">
            {cols.map((c, i) => <th key={i} className="h-[18px] border-r border-[#7c7d88] p-0 pb-[4px] pl-[3px] leading-[14px]">{c}</th>)}
          </tr>
        </thead>
        <tbody>
          {Array.from({ length: 12 }, (_, r) => (
            <tr key={r} className={r % 2 ? "bg-[#e6e6e8]" : "bg-white"}>
              {cols.map((c, i) => <td key={i} className="h-[15px] border-r-2 border-b border-[#f4f4f5] p-0" />)}
            </tr>
          ))}
        </tbody>
      </table>
      <div className="flex h-[34px] shrink-0 items-center border-t-2 border-[#c4c4c8] bg-[#e6e6e8] pr-[11px] pl-[12px]">
        <Tri d="left" fill="#141a34" className="h-4 w-[9px]" />
        <div className="ml-[11px] h-[6px] w-[286px] bg-[#141a34]" />
        <span className="flex-1" />
        <Tri d="right" fill="#141a34" className="h-4 w-[9px]" />
      </div>
      <div className="flex flex-1 items-center justify-between px-px">
        <button aria-label="Info text" className={btn}><svg viewBox="0 0 24 20" className="h-5 w-6">{grid}<path d="M14.500 10c0-4 7-4 7 0 0 3-3.500 2-3.500 4.500M18 16.500V20" stroke="#ececee" strokeWidth="5.500" fill="none" /><path d="M14.500 10c0-4 7-4 7 0 0 3-3.500 2-3.500 4.500M18 16.500V20" stroke="#5a5055" strokeWidth="2.800" fill="none" /></svg></button>
        <span className="flex gap-1">
          <button aria-label="Loop-in alarm" className={btn}><svg viewBox="0 0 22 20" className="h-5 w-[22px]"><path d="M8 3l8 17H0z" fill="#5a5055" /><path d="M8 9v6M8 16.500v2" stroke="#eee" strokeWidth="2" /><path d="M11 1c5 0 7 3 6 7" stroke="#5a5055" strokeWidth="3" fill="none" /><path d="M12 7h10l-5 6z" fill="#5a5055" /></svg></button>
          <button aria-label="Acknowledge" className={btn}><svg viewBox="0 0 26 20" className="h-5 w-[26px]">{grid}<path d="M12 13l5 5 8-9" stroke="#ececee" strokeWidth="6.500" fill="none" /><path d="M12 13l5 5 8-9" stroke="#5a5055" strokeWidth="3.800" fill="none" /></svg></button>
        </span>
      </div>
    </div>
  );
}

const H = "absolute h-2 w-2 border border-[#2f6be0] bg-[#b4dcff]";

function HmiScreen() {
  const hbtn = "rounded-[3px] border border-[#4c4d5a] bg-linear-to-b from-[#7c7d8a] via-[#62636f] to-[#5c5d69] text-[15px] font-bold text-white";
  const lab = "rounded-[3px] bg-white px-1 text-[15px] leading-[22px] font-bold text-[#31344a]";
  return (
    <div className={`relative h-[450px] w-[751px] bg-[#99ccff] ${HMI}`}>
      <div className="absolute top-[382px] left-[17px] flex w-[716px] justify-between">
        {[0, 1, 2, 3, 4, 5, 6, 7].map((i) => (
          <div key={i} className="flex h-[67px] w-[67px] items-center justify-center rounded-[3px] border border-[#a4c4e4] bg-[#bcd6f0]">
            {i === 0 && <svg viewBox="0 0 50 50" className="h-[50px] w-[50px]"><path d="M1 1h48v48H1z" fill="#aac6e2" stroke="#7f98b8" strokeWidth="2" /><path d="M1 1h48v5H1z" fill="#7f98b8" /><path d="M25 11l17 33H8z" fill="#738cae" /><path d="M25 20v15M25 38v4" stroke="#b4cce6" strokeWidth="5" /></svg>}
          </div>
        ))}
      </div>
      <svg className="absolute inset-0 h-full w-full" aria-hidden="true">
        <rect width="751" height="450" fill="url(#dots)" />
        <path d="M0 69.500h751" stroke="#10233a" strokeWidth="1.500" />
      </svg>
      <div className="absolute top-[6px] left-[13px] flex flex-col">
        <span className="font-['Noto_Sans',sans-serif] text-[22px] leading-[26px] font-bold text-[#00a09b]">SIEMENS</span>
        <span className="font-['Noto_Sans',sans-serif] text-[16px] leading-[29px] text-[#152238]">SIMATIC HMI</span>
      </div>
      <h2 className="absolute top-[12px] left-[124px] h-[44px] w-[526px] border border-[#b0b4d0] bg-white pl-2 text-[21px] leading-[40px] font-bold text-[#31344a]">Batch Mixer Control Panel</h2>
      <div className="absolute top-[2px] right-[2px] flex flex-col text-right text-[15px] leading-[34px] text-[#152238]"><span>12/31/2000</span><span>10:59:39 AM</span></div>

      <svg viewBox="0 0 223 149" className="absolute top-[85px] left-[9px] h-[149px] w-[223px]">
        <rect x=".5" y=".5" width="222" height="148" fill="#d9d9d9" stroke="#1c2440" strokeWidth="1.500" />
        <circle cx="109" cy="34" r="22.500" fill="#00ffff" stroke="#24506c" />
        <path d="M1 76.500h220M3.500 76v69M219.500 76v69M3 145.500h218" stroke="#1c2440" fill="none" />
        <rect x="3.500" y="83" width="216" height="58" fill="#3366ff" stroke="#1c2440" />
      </svg>

      <button className={`${hbtn} absolute top-[241px] left-[10px] h-[46px] w-[138px]`}>Start Batch</button>
      <button className={`${hbtn} absolute top-[241px] left-[156px] h-[46px] w-[73px]`}>Stop</button>

      <div className="absolute top-[301px] left-[11px] flex flex-col items-start">
        <span className={`${lab} w-[90px]`}>Level (%)</span>
        <span className={`${lab} mt-1 w-11`}>Step</span>
        <span className={`${lab} mt-2 w-[116px]`}>Temperature</span>
      </div>
      <div className="absolute top-[302px] left-[138px] flex flex-col">
        <IoField label="Level" /><IoField label="Step" />
        <span className="mt-px"><IoField label="Temperature" /></span>
      </div>

      <AlarmView />
      <i className={`${H} top-[93px] left-[265px]`} /><i className={`${H} top-[93px] left-[493px]`} /><i className={`${H} top-[93px] left-[720px]`} />
      <i className={`${H} top-[232px] left-[265px]`} /><i className={`${H} top-[232px] left-[720px]`} />
      <i className={`${H} top-[371px] left-[265px]`} /><i className={`${H} top-[371px] left-[493px]`} /><i className={`${H} top-[371px] left-[720px]`} />
    </div>
  );
}

function Keypad() {
  const keys = [["⎵\\@#", "1"], ["GHI", "4"], ["PQRS", "7"], ["a/A", "-"]];
  return (
    <div className="flex min-w-0 flex-1 flex-col overflow-hidden bg-[#787878] pt-[41px] pl-[21px] font-['Liberation_Sans',sans-serif] text-[#1a1a1a]">
      {keys.map(([a, b], i) => (
        <div key={a} className="flex h-[73px] shrink-0 flex-col border-b-4 border-[#5d6b80] pt-[3px]">
          <span className="flex items-center gap-[2px] text-[14px] leading-6">{i === 3 && <i className="h-3 w-3 bg-[#e4e4dc]" />}{a}</span>
          <span className="pl-[27px] text-[20px] leading-6 text-black">{b}</span>
        </div>
      ))}
      <div className="flex h-[97px] shrink-0 items-center border-b-4 border-[#5d6b80] pt-[34px] pl-[12px]">
        <svg viewBox="0 0 42 12" className="h-3 w-[42px]"><path d="M0 6l12-6v4h30v4H12v4z" /></svg>
      </div>
      <span className="mt-[55px] pl-[29px] text-[15px] leading-4 font-bold text-white">SHIFT</span>
    </div>
  );
}

function Canvas() {
  return (
    <div className="flex min-h-0 flex-1 overflow-hidden">
      <div className="w-[66px] shrink-0 bg-[#787878]" />
      <div className="w-[104px] shrink-0 bg-[#6f8699]"><Keys names={["F1", "F3", "F5", "F7"]} /></div>
      <div className="w-[806px] shrink-0 bg-black pt-[34px] pl-[27px]"><HmiScreen /></div>
      <div className="flex w-[104px] shrink-0 justify-end bg-[#6f8699]"><Keys names={["F2", "F4", "F6", "F8"]} /></div>
      <Keypad />
      <div className="flex w-[22px] shrink-0 flex-col items-center bg-[#c2c2c2] py-px">
        <ScrollBtn d="up" />
        <div className={`${THUMB} mt-[60px] h-[227px] w-[21px] bg-linear-to-r from-[#efefef] to-[#d0d0d0]`}><GripV /></div>
        <span className="flex-1" />
        <ScrollBtn d="down" />
      </div>
    </div>
  );
}

function CanvasFooter() {
  return (
    <div className="flex h-[24px] shrink-0 items-center border-t border-[#8a8a8a] bg-[#e9e9e9]">
      <div className="flex w-[840px] items-center bg-[#c2c2c2]">
        <ScrollBtn d="left" className="h-[22px] w-[21px]" />
        <div className={`${THUMB} ml-[5px] h-[22px] w-[630px] bg-linear-to-b from-[#efefef] to-[#d4d4d4]`}><GripH /></div>
        <span className="flex-1" />
        <ScrollBtn d="right" className="h-[22px] w-[21px]" />
      </div>
      <div className="relative ml-[7px] h-[22px] w-[194px]">
        <select aria-label="Zoom" className="h-full w-full appearance-none border border-[#8a8a8a] bg-white pl-[3px] text-[14px] leading-5 text-[#222]"><option>75%</option></select>
        <span className="pointer-events-none absolute inset-y-0 right-0 flex w-5 items-center justify-center border border-[#8a8a8a] bg-[#e0e0e0]"><svg viewBox="0 0 10 6" className="h-[6px] w-[9px]"><path d="M0 0h10L5 6z" /></svg></span>
      </div>
      <div className="ml-[23px] w-[84px]">
        <svg viewBox="0 0 84 20" className="h-5 w-full"><path d="M0 8h84" stroke="#999" strokeWidth="1.500" /><path d="M0 18h84" stroke="#333" strokeWidth="4" strokeDasharray="1.500 4" /><path d="M18 2h8v9l-4 4-4-4z" fill="#ddd" stroke="#777" /></svg>
      </div>
      <span className="flex-1" />
      <span className="pr-[3px]"><Icon n="corner" className="h-4 w-4" /></span>
    </div>
  );
}

const TABOFF = "border border-[#8a8a8a] bg-linear-to-b from-[#dedede] to-[#d0d0d0] text-[#686868]";
const TABON = "border border-b-0 border-[#8a8a8a] bg-linear-to-b from-[#fafafa] to-[#ebebeb] text-black";

function Inspector() {
  const sub = [["General", "w-[115px]"], ["Cross-references", "w-[179px]"], ["Compile", "w-[107px]", true], ["Energy Suite", "w-[144px]"], ["Test results", "w-[137px]"], ["Generate", "w-[117px]"]];
  const ib = "flex h-[27px] w-[27px] items-center justify-center rounded-sm border border-[#2f6be0] bg-white";
  return (
    <section className="flex h-[140px] shrink-0 flex-col bg-[#ececec]">
      <div className="flex h-[30px] shrink-0 items-end justify-end bg-[#b0b0b0] pr-[6px] text-[16px] leading-6 font-semibold">
        <button className={`${TABOFF} flex h-[26px] w-[140px] items-center gap-[9px] border-b-0 pl-[2px]`}><Icon n="prop" className="h-[18px] w-[18px]" />Properties</button>
        <button className={`${TABON} flex h-[26px] w-[92px] items-center gap-2 pl-[4px]`}><Icon n="infot" className="h-[19px] w-[19px]" />Info</button>
        <button className={`${TABOFF} flex h-[26px] w-[157px] items-center gap-2 border-b-0 pl-[3px]`}><Icon n="diag" className="h-[19px] w-[19px]" />Diagnostics</button>
        <button className={`${TABOFF} h-[26px] w-[105px] border-b-0 pl-[10px] text-left`}>Plug-ins</button>
        <span className="flex h-full items-center gap-[9px] pl-[21px]"><WinRest /><svg viewBox="0 0 14 14" className="h-[14px] w-[14px]"><path d="M0 2h14M0 5h14M0 11.500h14" stroke="#eee" strokeWidth="1.500" /></svg><svg viewBox="0 0 16 8" className="h-2 w-4"><path d="M0 0h16L8 8z" fill="#fff" /></svg></span>
      </div>
      <div className="flex h-[35px] shrink-0 items-end gap-[2px] border-t-[3px] border-b border-t-[#f4f4f4] border-b-[#8a8a8a] bg-[#cbcbcb] pl-2">
        {sub.map(([t, w, on]) => (
          <button key={t} className={`${w} ${on ? TABON : TABOFF} flex h-[27px] items-center justify-between pr-[6px] pl-[14px] text-[16px] font-semibold`}>
            {t}{t === "General" && <Icon n="infoy" className="h-4 w-4" />}
          </button>
        ))}
      </div>
      <div className="flex h-[34px] shrink-0 items-center gap-[3px] bg-[#e9e9e9] pl-[5px]">
        <button aria-label="Errors" className={ib}><Icon n="cross" /></button>
        <button aria-label="Warnings" className={ib}><Icon n="warn" /></button>
        <button aria-label="Information" className={ib}><Icon n="info" /></button>
        <div className="relative ml-[3px] h-6 w-[249px]">
          <select aria-label="Message filter" className="h-full w-full appearance-none border border-[#8a8a8a] bg-white pl-[5px] text-[14px] text-[#222]"><option>Show all messages</option></select>
          <span className="pointer-events-none absolute inset-y-0 right-0 flex w-5 items-center justify-center border border-[#8a8a8a] bg-[#e0e0e0]"><svg viewBox="0 0 10 6" className="h-[6px] w-[9px]"><path d="M0 0h10L5 6z" /></svg></span>
        </div>
      </div>
      <p className="h-[24px] shrink-0 pl-4 text-[14px] leading-[24px] text-[#222]">Compiling finished (errors: 0; warnings: 2)</p>
      <div className="min-h-0 flex-1 overflow-hidden">
        <table className="w-full table-fixed text-left text-[14px] text-[#444]">
          <colgroup><col className="w-[36px]" /><col className="w-[247px]" /><col className="w-[439px]" /><col className="w-16" /><col className="w-[63px]" /><col className="w-[68px]" /><col className="w-[87px]" /><col /></colgroup>
          <thead><tr className="bg-linear-to-b from-[#eceff2] to-[#cdd4da]">{["!", "Path", "Description", "Go to", "?", "Errors", "Warnings", "Time"].map((h, i) => <th key={h} className={`h-[23px] border-t border-r border-[#a8a8a8] p-0 leading-[22px] font-normal ${i === 0 ? "pl-[8px]" : "pl-1"}`}>{h}</th>)}</tr></thead>
        </table>
      </div>
    </section>
  );
}

function Editor() {
  const path = ["Project3", "HMI_1 [KP700 Comfort]", "Screens", "Root screen"];
  return (
    <main className="flex min-w-0 flex-1 flex-col bg-[#ececec]">
      <div className="flex h-[30px] shrink-0 items-center justify-between bg-[#2c344d] pr-[8px] pl-[6px]">
        <nav className="flex items-center text-[16px] font-semibold text-white">
          {path.map((p, i) => <React.Fragment key={p}>{i > 0 && <Tri d="right" className="mx-[13px] h-[11px] w-[6px]" />}<a href="#">{p}</a></React.Fragment>)}
        </nav>
        <div className="flex items-center gap-[9px]">
          <button aria-label="Minimize editor"><WinMin /></button><button aria-label="Float editor"><WinRest /></button><button aria-label="Maximize editor"><WinMax /></button><button aria-label="Close editor"><WinX /></button>
        </div>
      </div>
      <div className="h-[35px] shrink-0 border-t-4 border-b border-t-[#f0f0f0] border-b-[#8a8a8a] bg-[#cbcbcb]" />
      <EditorToolbar />
      <Canvas />
      <CanvasFooter />
      <div className="h-1 shrink-0 bg-[#1c2133]" />
      <Inspector />
    </main>
  );
}

/* ---------- toolbox ---------- */

const page = <><path d="M1 2h33v31H1z" fill="url(#pg)" stroke="#9fb0e8" /><path d="M1 33h33" stroke="#4a64e0" strokeWidth="2.500" /></>;

const big = {
  line: <path d="M4 32L31 4" stroke="#5b7cf5" strokeWidth="1.800" />,
  poly: <path d="M0 24L21 3v15l13 13H0" stroke="#5b7cf5" strokeWidth="1.500" />,
  pgon: <path d="M1 23L21 3v15l13 13H1z" fill="url(#lb)" stroke="#5b7cf5" />,
  ell: <ellipse cx="17.500" cy="18" rx="17" ry="9.500" fill="url(#lb)" stroke="#4c6cf0" />,
  circ: <circle cx="17.500" cy="17.500" r="17" fill="url(#lb)" stroke="#4c6cf0" />,
  rect: <path d="M1 4h33v27H1z" fill="url(#lb)" stroke="#4c6cf0" />,
  text: <path d="M8 30L17 6h2l9 24M11.500 22h13" stroke="#0c0c44" strokeWidth="2.800" />,
  pic: <>{page}{mountain}</>,
  num: <><path d="M1 8h33v19H1z" fill="#e2e2e2" stroke="#333" strokeWidth="1.300" /><path d="M1 27h33" stroke="#000" strokeWidth="2.500" /><path d="M4 11.500h7v12H4zM14 22v2.500M18.500 11v13.500M22 11.500h8v6h-7.500v6H31" stroke="#111" strokeWidth="2.600" /></>,
  btn: <><path d="M1 8h33v19H1z" fill="url(#bt)" /><path d="M1 27h33V8" stroke="#000" strokeWidth="2.800" /><path d="M1 26V8h31" stroke="#fff" /></>,
  sym: <><path d="M1 8h18v18H1z" fill="#eef2ff" stroke="#9fb0e8" /><path d="M19 8h15v18H19z" fill="url(#bt)" stroke="#888" /><path d="M1 27h18" stroke="#4a64e0" strokeWidth="2" /><path d="M4.500 11v13M8.500 12h7v11h-7z" stroke="#0c0c50" strokeWidth="2.600" /><path d="M22 15h10l-5 6z" fill="#111" /></>,
  gio: <><path d="M1 2h33v31H1z" fill="url(#pg)" stroke="#9fb0e8" /><circle cx="8" cy="10" r="4" fill="#f7a52e" /><path d="M2 29l6-8 4 4 6-8 6 12z" fill="url(#db)" /><path d="M1 33h33" stroke="#4a64e0" strokeWidth="2.500" /><path d="M25 1h9v33h-9z" fill="url(#bt)" stroke="#777" /><path d="M25 9h9M25 26h9" stroke="#777" /><path d="M26.500 7l3-4 3 4zM26.500 28l3 4 3-4z" fill="#000" /></>,
  dt: <><path d="M14 9h20v25H14z" fill="#fff" stroke="#6a82d8" /><path d="M14 10.500h20" stroke="#2a44e0" strokeWidth="4" /><path d="M14 33.500h20" stroke="#2a44e0" strokeWidth="2" /><path d="M29 16h-8v6c7-2 9 7 2 7h-3" stroke="#0c0c44" strokeWidth="2.800" /><circle cx="9.500" cy="10" r="9" fill="#f0f3ff" stroke="#8fa2e8" strokeWidth="1.500" /><path d="M9 5v6h4" stroke="#0c0c44" strokeWidth="2" /></>,
  bar: <><path d="M4 1h16v23H4z" fill="#4560f0" /><path d="M4 24h16v10H4z" fill="#2a8a50" /><path d="M4 1h5v33H4z" fill="#fff" opacity="0.200" /><path d="M23 2h8M23 8h9M23 14h8M23 20h9M23 27h8M23 33h9" stroke="#888" strokeWidth="1.300" /></>,
  sw: <><path d="M1 2h33v31H1z" fill="#b4b4b4" stroke="#777" /><path d="M1 33h33" stroke="#555" strokeWidth="2" /><path d="M6 6h4v7H6zM29 5v9" stroke="#111" strokeWidth="2.200" /><path d="M5 16h26v13H5z" fill="#ddd" stroke="#444" /><path d="M6 17h11v12H6z" fill="#5b86f0" /><path d="M9 17v11M13 17v11" stroke="#bcd0ff" strokeWidth="1.500" /></>,
  lib: <><path d="M1 5h15l1.500 2L19 5h15v25H1z" fill="#e8eeff" stroke="#1c30a8" strokeWidth="2" /><path d="M1 31h33" stroke="#1020a0" strokeWidth="3" /><path d="M13 33h9" stroke="#101850" strokeWidth="3" /><path d="M17.500 7v24" stroke="#1c30a8" /><circle cx="9" cy="15" r="5" fill="none" stroke="#2a4ae0" strokeWidth="1.800" /><circle cx="9" cy="15" r="1.500" fill="#2a4ae0" /><path d="M5 25h8v-3H5zM22 10h8M26 10v6M20 15v10l12-10v10z" stroke="#2a4ae0" strokeWidth="1.700" /></>,
  slider: <><path d="M14 1v33" stroke="#999" strokeWidth="3" /><path d="M19 2h9M19 9h9M19 15h9M19 21h9M19 27h9M19 33h9" stroke="#888" strokeWidth="1.300" /><path d="M6 9h15v8H6z" fill="url(#lb)" stroke="#5b7cf5" /><path d="M6 18.500h17V10" stroke="#000" strokeWidth="2.500" /></>,
  gauge: <><circle cx="17.500" cy="17.500" r="17" fill="#8fa8ff" stroke="#6a86f0" /><path d="M4.500 26.500A15.500 15.500 0 013 17" stroke="#20c040" strokeWidth="5" /><path d="M3 17A14.500 14.500 0 0132 17" stroke="#f4ea10" strokeWidth="5" strokeDasharray="3.500 0.900" /><path d="M32 18A15 15 0 0130 26.500" stroke="#e84020" strokeWidth="5" /><circle cx="17.500" cy="17.500" r="3.500" fill="#0c0c30" /><path d="M17.500 17.500L8 7" stroke="#0c0c30" strokeWidth="3" /></>,
  clock: <><circle cx="17.500" cy="17.500" r="16.500" fill="#f2f5ff" stroke="#8fa2e8" strokeWidth="2" /><path d="M17.500 4v14H26" stroke="#0c0c44" strokeWidth="2.800" /></>,
  alarm: <><path d="M1 1h20v13H1z" fill="#dfe8ff" stroke="#8fa2e8" /><path d="M1 1l10 9L21 1" stroke="#5b78e0" /><path d="M1 14h12" stroke="#3c5ce0" strokeWidth="2" /><path d="M21 6l14 27H7z" fill="#f8ec10" stroke="#c0a810" /><path d="M21 13v11M21 27v3.500" stroke="#0c0c44" strokeWidth="3.600" /></>,
  trend: <>{page}<path d="M2 10h31M2 18h31M12 3v29M22 3v29" stroke="#c8d2f4" /><path d="M6 5v22h25" stroke="#000" strokeWidth="2.800" /><path d="M7 20l8-8 7 2 8-9" stroke="#c838e8" strokeWidth="2" /></>,
  user: <><circle cx="8" cy="5" r="4" fill="#f0b888" /><path d="M4 4c0-5 8-5 8 0z" fill="#18205c" /><path d="M2 10h12v14h-2v12H4V24H2z" fill="#1b5c9c" /><circle cx="25.500" cy="13" r="8" fill="#dcb43c" stroke="#9a7814" /><circle cx="25.500" cy="9.500" r="2" fill="#f4f4f4" stroke="#9a7814" /><path d="M24 20h5v14l-3 1-3-3 2-2-2-2 1-2z" fill="#dcb43c" stroke="#9a7814" strokeWidth="0.800" /></>,
  web: <><path d="M1 2h32v24H1z" fill="url(#pg)" stroke="#9fb0e8" /><path d="M1 3.500h32" stroke="#1d4c88" strokeWidth="4" /><path d="M1 28h13" stroke="#3c5ce0" strokeWidth="2" /><circle cx="23" cy="23" r="11.500" fill="#e8f0ff" stroke="#2c4c90" strokeWidth="1.500" /><path d="M12 23h22M23 12v22M14 17h18M14 29h18" stroke="#2c4c90" strokeWidth="1.200" /><ellipse cx="23" cy="23" rx="5.500" ry="11" stroke="#2c4c90" strokeWidth="1.200" /></>,
  watch: <><path d="M1 1h31v26H1z" fill="url(#pg)" stroke="#9fb0e8" /><path d="M4 5h25M4 10h25M4 15h25M4 20h25" stroke="#556" strokeWidth="2" strokeDasharray="6 3" /><path d="M0 24h34M3 24v6c4 4 11 3 11-3M20 24v5c3 5 11 3 12-5" stroke="#16206c" strokeWidth="2.800" /></>,
  dish: <><path d="M6 0c-4 14 6 30 28 28z" fill="url(#db)" /><path d="M14 22L1 33h18z" fill="#1420a8" /><path d="M15 12L29 4M25 3h5v5" stroke="#223" strokeWidth="1.500" /></>,
  recv: <><path d="M9 1h25v14H9z" fill="#cdeef8" stroke="#5298b8" /><path d="M6 5h25v14H6z" fill="#e0f6fc" stroke="#5298b8" /><path d="M3 9h26v14H3z" fill="#f0fcff" stroke="#5298b8" /><path d="M1 20h28l6-3v11l-4 5H1z" fill="url(#db)" /><path d="M10 23h9v4h-9z" fill="#fff" /></>,
  fxy: <>{page}<path d="M2 10h31M2 18h31M12 3v29M22 3v29" stroke="#c8d2f4" /><path d="M7 5v22h24" stroke="#000" strokeWidth="2.800" /><path d="M8 16l5 3 6-6 4 2 9-10" stroke="#c838e8" strokeWidth="2" /><path d="M10 5l2 4M15 5l-4 8M25 19l5 6M30 19l-5 6" stroke="#000" strokeWidth="1.600" /></>,
  sys: <>{page}<path d="M8 5c-3 12 0 12 4 12s7-2 4-12M12 17c-1 12 4 13 8 11 3-2 2-5 4-7" stroke="#223" strokeWidth="2.300" /><circle cx="25" cy="20" r="3" fill="#ccc" stroke="#223" strokeWidth="1.600" /></>,
  media: <><path d="M17.500 1A16.500 16.500 0 0134 17.500H17.500z" fill="#4ca84c" /><path d="M34 17.500A16.500 16.500 0 0117.500 34V17.500z" fill="#f0c828" /><path d="M17.500 34A16.500 16.500 0 011 17.500h16.500z" fill="#5a86d0" /><path d="M1 17.500A16.500 16.500 0 0117.500 1v16.500z" fill="#e07060" /><circle cx="17.500" cy="17.500" r="16.500" stroke="#999" /><circle cx="17.500" cy="17.500" r="11" fill="#e4eef8" /><path d="M13 11l11 6.500L13 24z" fill="#12407c" /></>,
  plug: <>{page}<path d="M4 14h6M4 21h6M27 17.500h5" stroke="#445" strokeWidth="2.800" /><path d="M9 9h16v16H9z" fill="#4c586c" /><path d="M16 13h8v8h-8z" fill="#e8e8e8" stroke="#222" /><path d="M25 14h3v7h-3z" fill="#222" /></>,
  step: <>{page}<path d="M1 12h33v8H1z" fill="#f8c468" /><path d="M17.500 6v24" stroke="#333" strokeWidth="1.500" /><path d="M11 5h13v5H11zM11 24h13v5H11z" fill="#eee" stroke="#999" strokeWidth="1.800" /><path d="M12 13h11v5H12z" fill="#fff" stroke="#0c0c50" strokeWidth="2.600" /></>,
  plcd: <>{page}<path d="M5 5h26v30H5z" fill="#888" stroke="#666" /><path d="M6 12l3-7 3 7z" fill="#e02020" /><path d="M14 5h6v7h-6z" fill="#2080e0" /><path d="M6 14h6v6H6zM14 14h6v6h-6zM22 14h8v9h-8z" fill="#fff" /><path d="M26 15l4 8h-8z" fill="#111" /></>,
  list: <><path d="M0 1h33v34H0z" fill="url(#pg)" stroke="#9fb0e8" /><path d="M3 7h27M3 12h27M3 17h27" stroke="#556" strokeWidth="2" strokeDasharray="7 3" /><path d="M14 22l3-3h13l3 3v13H14z" fill="#667084" /></>,
  cam: <><path d="M1 8h22l-3 7H8z" fill="#303030" /><path d="M4 12h20v22H4z" fill="#505868" /><path d="M24 17l10-6v22l-10-6z" fill="#303848" /><path d="M10 18h10" stroke="#8a94a8" strokeWidth="2" /></>,
};

function Pdf() {
  return <span className="flex h-[35px] w-[35px] flex-col border border-[#c8d2f4] bg-white"><span className="h-[15px] bg-[#e01c1c] text-center text-[12px] leading-[15px] font-bold text-white">PDF</span></span>;
}

function Palette({ items, className }) {
  return (
    <div className={`grid auto-rows-[45px] grid-cols-4 content-start bg-[#efefef] ${className}`}>
      {items.map((k) => (
        <button key={k} aria-label={k} className="flex items-center justify-center">
          {k === "pdf" ? <Pdf /> : <svg viewBox="0 0 35 36" className="h-9 w-[35px]" fill="none">{big[k]}</svg>}
        </button>
      ))}
    </div>
  );
}

function Toolbox() {
  return (
    <aside className="flex w-[243px] shrink-0 flex-col border-r-2 border-l-[3px] border-[#1c2133] bg-[#9a9a9a]">
      <div className="flex h-[30px] shrink-0 items-center justify-between bg-[#b0b0b0] pr-[10px] pl-[6px]">
        <h2 className="text-[16px] font-semibold text-white">Toolbox</h2>
        <div className="flex items-center gap-[11px]"><WinRest /><PinBars flip /><Tri d="right" /></div>
      </div>
      <div className="h-[8px] shrink-0 border-t-4 border-[#f0f0f0] bg-[#e4e4e4]" />
      <h3 className="h-[27px] shrink-0 border-b border-[#9a9a9a] bg-linear-to-b from-white via-[#e6e6e6] to-[#ececec] pl-[6px] text-[16px] leading-6 font-semibold text-[#1c1c1c]">Options</h3>
      <div className="flex h-[35px] shrink-0 items-center bg-[#e9e9e9] pr-[6px] pl-[3px]">
        <Tool n="cursor" label="Select" /><Tool n="stamp" label="Stamp" /><Tool n="tools" label="Settings" /><Tool n="cols" label="Columns" />
        <Tri d="right" fill="#000" className="mb-3 ml-1 h-[11px] w-[5px]" />
        <span className="flex-1" />
        <button aria-label="Window"><Icon n="win" className="h-[18px] w-[18px]" /></button>
      </div>
      <div className="h-[3px] shrink-0" />
      <SectionHead>Basic objects</SectionHead>
      <Palette className="h-[187px] shrink-0 pt-[2px] pr-[29px]" items={["line", "poly", "pgon", "ell", "circ", "rect", "text", "pic"]} />
      <div className="h-[3px] shrink-0" />
      <SectionHead>Elements</SectionHead>
      <Palette className="h-[188px] shrink-0 pt-[3px] pr-[29px]" items={["num", "btn", "sym", "gio", "dt", "bar", "sw", "lib", "slider", "gauge", "clock"]} />
      <div className="h-[3px] shrink-0" />
      <SectionHead>Controls</SectionHead>
      <div className="flex min-h-0 flex-1 overflow-hidden bg-[#efefef]">
        <Palette className="h-[190px] flex-1 pt-[2px] pr-[6px]" items={["alarm", "trend", "user", "web", "watch", "dish", "recv", "fxy", "sys", "media", "plug", "step", "plcd", "list", "cam", "pdf"]} />
        <div className="flex w-[23px] shrink-0 flex-col items-center bg-[#c2c2c2] py-px">
          <ScrollBtn d="up" />
          <div className={`${THUMB} mt-[3px] h-[102px] w-[21px] bg-linear-to-r from-[#efefef] to-[#d0d0d0]`}><GripV /></div>
          <span className="flex-1" />
          <ScrollBtn d="down" />
        </div>
      </div>
      <div className="h-[3px] shrink-0" />
      <SectionHead open={false}>Graphics</SectionHead>
    </aside>
  );
}

function TaskTabs() {
  const tabs = [["tbA", "Toolbox", "h-[120px]", true], ["anim", "Animations", "h-[150px]"], ["layout", "Layout", "h-[111px]"], ["instr", "Instructions", "h-[152px]"], ["tasks", "Tasks", "h-[103px]"]];
  return (
    <div className="flex w-[28px] shrink-0 flex-col bg-[#b0b0b0] pr-[3px]">
      <div className="flex flex-col gap-[3px] pt-[38px]">
        {tabs.map(([n, t, h, on]) => (
          <button key={t} className={`${h} flex flex-col items-center gap-[8px] border border-l-0 border-[#7c7c7c] pt-[2px] ${on ? "bg-[#f0f0f0] text-black" : "bg-[#d6d6d6] text-[#5c5c5c]"}`}>
            <Icon n={n} />
            <span className="text-[16px] leading-5 font-semibold [writing-mode:vertical-rl]">{t}</span>
          </button>
        ))}
      </div>
      <span className="flex-1" />
      <button aria-label="Previous task card" className="flex h-[27px] items-center justify-center border border-[#9a9a9a] bg-[#ebebeb]"><svg viewBox="0 0 12 6" className="h-[6px] w-3"><path d="M0 6h12L6 0z" fill="#888" /></svg></button>
      <button aria-label="Next task card" className="flex h-[27px] items-center justify-center border border-[#9a9a9a] bg-[#ebebeb]"><svg viewBox="0 0 12 6" className="h-[6px] w-3"><path d="M0 0h12L6 6z" fill="#555" /></svg></button>
    </div>
  );
}

/* ---------- bottom bar ---------- */

function BottomBar() {
  const tabs = [["overview", "Overview"], ["screen", "Root screen", true], ["mail", "HMI alarms"], ["tagt", "Main"]];
  return (
    <footer className="flex h-[34px] shrink-0 items-center bg-[#1c1c1c] text-white">
      <button className="flex w-[226px] items-center gap-[14px] pl-[44px] text-[16px] font-semibold"><Tri d="left" />Portal view</button>
      <div className="flex gap-[3px]">
        {tabs.map(([n, t, on]) => (
          <button key={t} className={`flex h-[25px] w-[142px] items-center gap-[6px] border border-[#d8d8d8] pl-[3px] text-[14px] ${on ? "bg-white font-medium text-black" : "bg-[#c4c4c4] text-[#2c2c2c]"}`}><Icon n={n} />{t}</button>
        ))}
      </div>
      <span className="flex-1" />
      <div className="flex w-[445px] items-center text-[14px]">
        <Icon n="stat" className="h-[22px] w-[22px]" />
        <span className="mx-[6px] h-[30px] w-px bg-[#666]" />
        <Icon n="ok" className="h-[18px] w-[18px]" />
        <span className="pt-[2px] pl-[7px]">The project Project3 was saved success...</span>
      </div>
    </footer>
  );
}

export default function App() {
  return (
    <div className={`h-screen overflow-hidden bg-[#1a1a1a] pr-[6px] pl-2 ${UI}`}>
      <Defs />
      <div className="flex h-full flex-col border-x border-[#f08a1c]">
        <TopBar />
        <div className="flex min-h-0 flex-1">
          <div className="flex w-7 shrink-0 flex-col bg-[#b0b0b0] pt-[30px]">
            <button className="flex h-[277px] items-center justify-center border-y-2 border-[#e4e4e4] pt-[6px]">
              <span className="rotate-180 text-[16px] leading-6 font-semibold text-white [writing-mode:vertical-rl]">Visualization</span>
            </button>
          </div>
          <ProjectTree />
          <Editor />
          <Toolbox />
          <TaskTabs />
        </div>
        <BottomBar />
      </div>
    </div>
  );
}
